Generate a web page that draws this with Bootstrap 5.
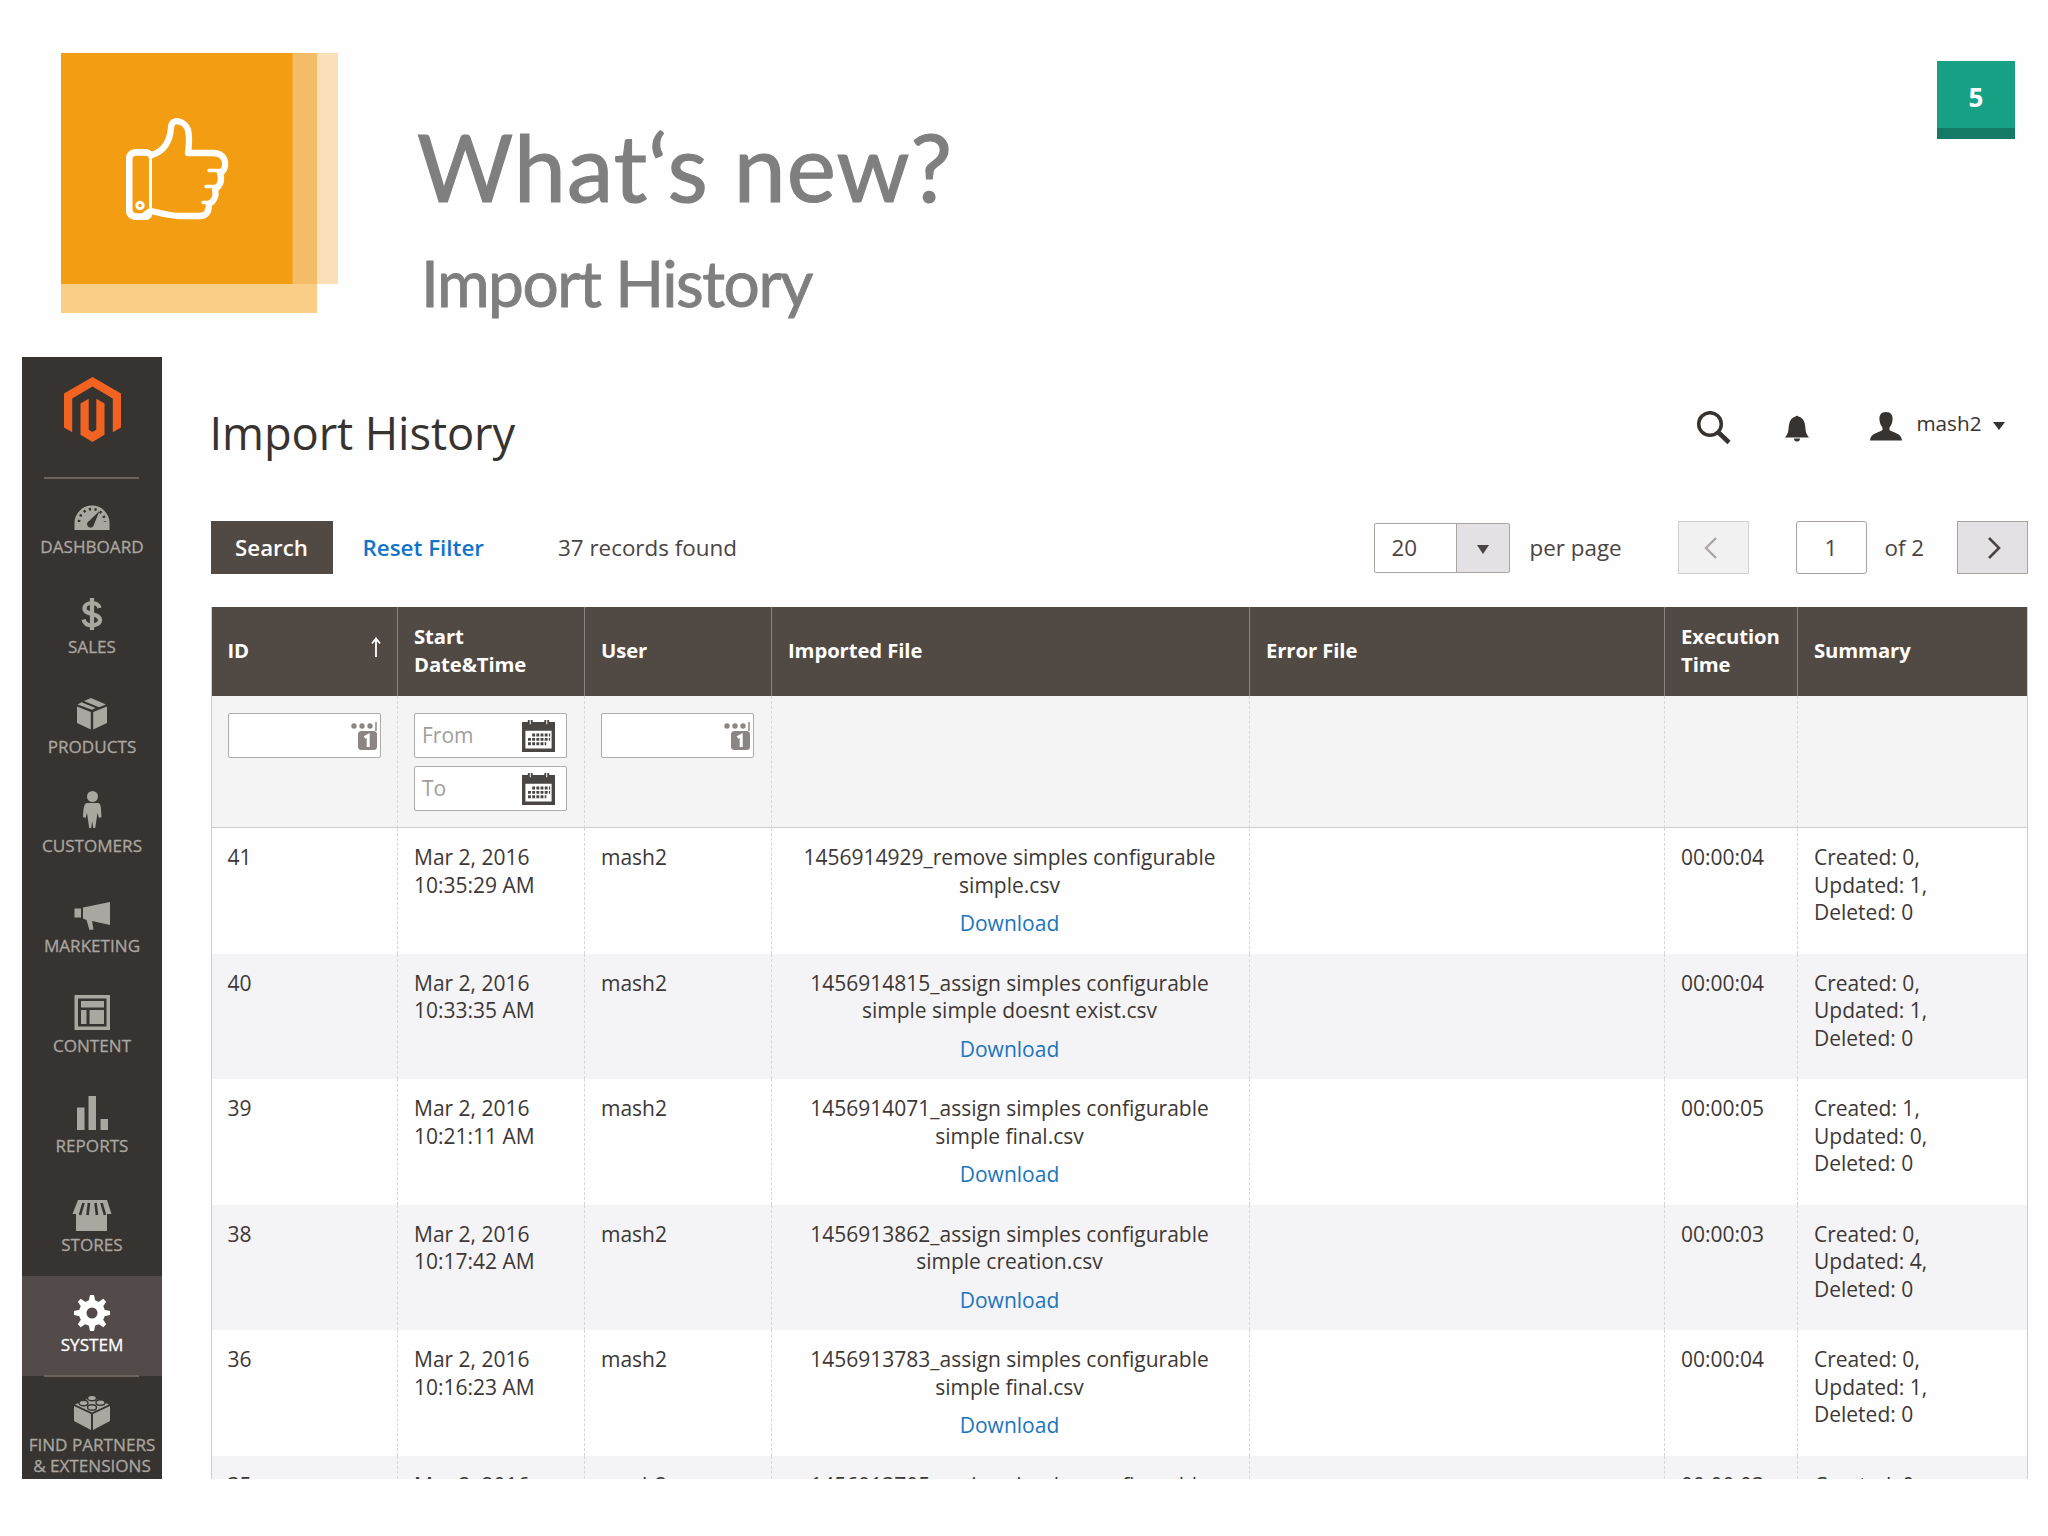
<!DOCTYPE html>
<html lang="en">
<head>
<meta charset="utf-8">
<meta name="viewport" content="width=device-width, initial-scale=1">
<title>What's new? Import History</title>
<link href="https://cdn.jsdelivr.net/npm/bootstrap@5.3.0/dist/css/bootstrap.min.css" rel="stylesheet">
<style>
body{width:2048px;height:1536px;overflow:hidden;background:#fefefe;font-family:"Open Sans","Noto Sans",sans-serif;color:#41362f}
.slide-head{height:357px;padding:53px 33px 0 61px}
.logo-art{width:277px;height:260px;flex:none}
.slide-titles{padding-left:79px;color:#7f7f7f;font-family:Lato,"Open Sans",sans-serif;white-space:nowrap}
.slide-titles h1{font-size:93px;line-height:110px;margin:58px 0 0;font-weight:400;letter-spacing:1.1px;-webkit-text-stroke:1.2px}
.slide-titles h2{font-size:64px;line-height:76px;margin:24px 0 0 4px;font-weight:400;letter-spacing:-1.5px;-webkit-text-stroke:.9px}
.page-no{width:78px;height:78px;margin-top:8px;background:#18a085;border-bottom:11px solid #147a66;color:#fff;font-weight:700;font-size:26px;line-height:73px;font-family:"Open Sans",sans-serif}
.shot{height:1122px;padding-left:22px;overflow:hidden}
.rail{width:140px;background:#373330;flex:none;overflow:hidden}
.rail-logo{height:121px;padding-top:20px;position:relative}
.rail-logo::after,.rail-item.active::after{content:"";position:absolute;left:22px;width:95px;bottom:-1px;height:2px;background:#6b635c}
.rail-item{height:99.75px;padding-top:17px;color:#aaa6a0;font-size:17.1px;line-height:21px;white-space:nowrap;position:relative;-webkit-text-stroke:.3px}
.rail-item svg{display:block;margin:0 auto 3px;width:40px;height:38px}
.rail-item.active{background:#524b49;color:#fff;padding-top:18px}
.rail-item.active svg{margin-bottom:2px}
.rail-item.low{padding-top:20px}
.rail-item.low svg{margin-bottom:0}
.rail-item.last{height:105px;padding-top:17px}
.work{width:1817px;margin-left:48.5px;flex:none}
.topbar{height:164px;padding:35px 23px 0 0}
.topbar h3{font-size:45.3px;line-height:60px;margin:11px 0 0 -1px;font-weight:400;color:#373330;letter-spacing:-.1px}
.tools{height:64px;color:#373330;font-size:20.7px}
.bar-row{height:86px;font-size:22.4px;line-height:30px;color:#4a4542}
.btn-dark2{background:#514943;color:#fff;border:0;border-radius:0;width:122px;height:53px;font-size:22.3px;font-weight:600;padding:0}
.reset{color:#1274c8;text-decoration:none;font-weight:600;margin-left:30px}
.found{margin-left:74px}
.picker{width:136px;height:50px;border:1.5px solid #aaa4a0;border-radius:2px;background:#fff}
.picker-arrow{width:53px;background:#e3e1e3;border-left:1.5px solid #aaa4a0}
.sq{width:71px;height:53px;border:1.5px solid #a8a2a0;background:#e3e1e3}
.sq.off{border-color:#d2cfd0;background:#f2f1f2}
.sq.field{background:#fff;border-radius:3px}
.grid{width:1817px;table-layout:fixed;border-collapse:separate;border-spacing:0;font-size:21px;line-height:27.5px;border-left:1.5px solid #cfcccc;border-right:1.5px solid #cfcccc}
.grid th{height:89px;background:#514943;color:#fff;font-weight:700;font-size:20.3px;padding:0 0 1.5px 16px;border-right:1.5px solid #8a837f;vertical-align:middle;letter-spacing:-.1px}
.grid td{height:125.6px;padding:16px 16px 0;vertical-align:top;border-right:1.5px dashed #d9d6d7;color:#3d3836;white-space:nowrap}
.grid th:last-child,.grid td:last-child{border-right:0}
.grid .filters td{height:132px;background:#f5f4f5;padding:17px 16px 0;border-bottom:1.5px solid #cfcccc}
.grid .alt td{background:#f4f3f5}
.grid td.text-center{padding-right:18px}
.grid a{display:block;color:#1b75bc;text-decoration:none;margin-top:11px}
.inbox{width:153px;height:45px;border:1.5px solid #aeabab;border-radius:2px;background:#fff;color:#a19d9a;padding:0 11px 0 7px}
.inbox.num{padding-right:2px}
.inbox+.inbox{margin-top:8px}
</style>
<script src="https://cdn.jsdelivr.net/npm/bootstrap@5.3.0/dist/js/bootstrap.bundle.min.js"></script>
</head>
<body>
<svg width="0" height="0" class="position-absolute">
  <symbol id="cal" viewBox="0 0 34 34"><path fill="#4a4643" fill-rule="evenodd" d="M0 3h34v31H0zM3.500 12v18.500h27V12z"/><g fill="none" stroke="#fff" stroke-width="3.400"><path d="M8.500 0v7M25.500 0v7"/></g><g fill="none" stroke="#4a4643" stroke-width="2"><path d="M7 1v5.500h3V1M24 1v5.500h3V1"/></g><g stroke="#4a4643" stroke-width="3" stroke-dasharray="3 1.300"><path d="M10.500 16.500H29M6.200 21H29M6.200 25.500H25"/></g></symbol>
  <symbol id="pin" viewBox="0 0 27 28"><g fill="#8b8683"><circle cx="3" cy="4" r="2.700"/><circle cx="11" cy="4" r="2.700"/><circle cx="19" cy="4" r="2.700"/><rect x="7" y="9" width="19" height="19" rx="3.500"/></g><path stroke="#8b8683" stroke-width="1.500" d="M25 0v9"/><path d="M13.500 15.500l3.700-2v11.500" fill="none" stroke="#fff" stroke-width="3"/></symbol>
</svg>

<header class="slide-head d-flex align-items-start">
  <svg class="logo-art" viewBox="0 0 277 260">
    <rect width="277" height="231" fill="#fae0b8"/>
    <rect y="231" width="256" height="29" fill="#f9ce87"/>
    <rect x="231" width="25" height="231" fill="#f5bd68"/>
    <rect width="231.500" height="231" fill="#f39d12"/>
    <path fill="#fff" fill-rule="evenodd" d="M75 96h9c4 0 7 2 7 6v59c0 4-3 6-7 6h-9c-6 0-10-4-10-9v-53c0-5 4-9 10-9zM75 102.700c-2 0-3.500 1.500-3.500 3.500v50c0 2 1.500 4 3.500 4h10c2 0 3-1.500 3-3.500v-50.500c0-2-1-3.500-3-3.500z"/>
    <g fill="none" stroke="#fff" stroke-width="6.300" stroke-linejoin="round" stroke-linecap="round">
      <path d="M86 99.500l5 2.500c12-4 18-14 19-27 0-11 14-7.500 17 2 2 8 1 15 0 23h25c16 0 14 18 7 20 3 8-1 14-5 16 2 8-2 13-6 15 0 8-3 12-9 12h-20c-10 0-20-3-29-5l-5 3"/>
      <path d="M160 117.500h-12M156 133.500h-11M152 149.500h-10" stroke-width="3.400"/>
      <circle cx="79" cy="152.500" r="3.200" stroke-width="3"/>
    </g>
  </svg>
  <div class="slide-titles">
    <h1>What‘s new?</h1>
    <h2>Import History</h2>
  </div>
  <div class="page-no text-center ms-auto">5</div>
</header>

<main class="shot d-flex">
  <nav class="rail text-center">
    <div class="rail-logo">
      <svg width="57" height="65" viewBox="0 0 57 65"><path fill="#f26322" d="M28.500 0L57 16.500v34l-8.200 4.700V21.500L28.500 9.500 8.200 21.500v33.700L0 50.500v-34zM16.500 26.500l8.200-4.700v31l3.800 2.300 3.800-2.300v-31l8.200 4.700v31.300L28.500 65l-12-7.200z"/></svg>
    </div>
    <div class="rail-item low"><svg viewBox="0 0 40 38"><path fill="currentColor" d="M2.500 32V25a17.500 17.500 0 0 1 35 0v7z"/><path d="M7 24a13 13 0 0 1 26 0" fill="none" stroke="#373330" stroke-width="2.600" stroke-dasharray="2.200 3.500"/><path fill="#373330" d="M27.500 13l-5.500 13.500a3.500 3.500 0 1 1-5-3.500z"/></svg>DASHBOARD</div>
    <div class="rail-item"><svg viewBox="0 0 40 38"><path d="M27.500 13c-1-4-4.500-5-7.500-5-4 0-7.500 2-7.500 5.500 0 7 15.500 4 15.500 11.500 0 3.500-4 5.500-8 5.500s-7.500-2-8.500-6M20 3v32" fill="none" stroke="currentColor" stroke-width="4.200"/></svg>SALES</div>
    <div class="rail-item"><svg viewBox="0 0 40 38"><path fill="currentColor" d="M5 11.500L18.800 17v17.500L5 28zM35 11.500L21.200 17v17.500L35 28zM5.500 9.500l4-2.200L23.500 13 20 14.800zM12 6l7-3 15 6.500-7 2.700z"/></svg>PRODUCTS</div>
    <div class="rail-item"><svg viewBox="0 0 40 38" overflow="visible"><circle cx="20.500" cy="2.500" r="5.500" fill="currentColor"/><path fill="currentColor" d="M15 9h11c3 0 3 5 3.500 14l-2.500 1-1.500-5-2.300 15h-2l-1-7-1 7h-2l-2.200-15-1.500 5-2.500-1c.5-9 1-14 4-14z"/></svg>CUSTOMERS</div>
    <div class="rail-item"><svg viewBox="0 0 40 38"><path fill="currentColor" d="M2.500 14.500H9v9H2.500zM11 13.500L38 8v23l-18-4 1.500 8.500-4 .5-3-10-3.500-1.500z"/></svg>MARKETING</div>
    <div class="rail-item"><svg viewBox="0 0 40 38"><path fill="currentColor" fill-rule="evenodd" d="M2.500 1h35.500v35H2.500zM6 4.500v28h28.500v-28zM9 7h23v6.500H9zM9 16h5.500v14H9zM17.500 16H32v14H17.500z"/></svg>CONTENT</div>
    <div class="rail-item"><svg viewBox="0 0 40 38"><path fill="currentColor" d="M5 13.500h7.500V36H5zM16.500 2H24v34h-7.500zM28.500 25H36v11h-7.500z"/></svg>REPORTS</div>
    <div class="rail-item low"><svg viewBox="0 0 40 38"><path fill="currentColor" d="M6 4h29l4.500 14H35v17H4V18H.5z"/><g stroke="#373330" stroke-width="2.600" fill="none"><path d="M11.500 7L8 19M17 7l-1.500 12M23.500 7L25 19M29.500 7L33 19"/></g></svg>STORES</div>
    <div class="rail-item active"><svg viewBox="0 0 40 38"><g fill="currentColor"><path id="tooth" d="M16.500 8l1.500-7h4l1.500 7v22L22 37h-4l-1.500-7z"/><use href="#tooth" transform="rotate(45 20 19)"/><use href="#tooth" transform="rotate(90 20 19)"/><use href="#tooth" transform="rotate(135 20 19)"/><circle cx="20" cy="19" r="13"/></g><circle cx="20" cy="19" r="5.500" fill="#524b49"/></svg>SYSTEM</div>
    <div class="rail-item last"><svg viewBox="0 0 40 38"><path fill="currentColor" d="M2 13l17 8v16L2 28zM38 13l-17 8v16l17-9zM3 11.500L19.500 4 37 11.500l-17 8z"/><g fill="currentColor" stroke="#373330" stroke-width="1.400"><ellipse cx="20" cy="5" rx="4.500" ry="2.800"/><ellipse cx="11.500" cy="10" rx="4.500" ry="2.800"/><ellipse cx="28.500" cy="9.500" rx="4.500" ry="2.800"/><ellipse cx="20" cy="14.500" rx="4.500" ry="2.800"/></g></svg>FIND PARTNERS<br>&amp; EXTENSIONS</div>
  </nav>

  <section class="work">
    <div class="topbar d-flex justify-content-between align-items-start">
      <h3>Import History</h3>
      <div class="tools d-flex align-items-center">
        <svg width="36" height="34" viewBox="0 0 36 34" class="mt-2"><circle cx="14" cy="13" r="11.300" fill="none" stroke="#373330" stroke-width="3.500"/><path d="M22 21l11 10.500" stroke="#373330" stroke-width="4.600"/></svg>
        <svg width="24" height="28" viewBox="0 0 24 28" class="mt-2" style="margin-left:53px"><path fill="#373330" d="M10.500 2.500a1.800 1.800 0 0 1 3 0C19 4 20 9 20.500 15c.3 4 1.500 6 3.500 8.500H0C2 21 3.200 19 3.500 15 4 9 5 4 10.500 2.500zM9 24.500h6a3 3 0 0 1-6 0z"/></svg>
        <svg width="32" height="29" viewBox="0 0 32 29" style="margin-left:61px" class="mt-1"><path fill="#373330" d="M16 0c5 0 7 3.500 6.500 8-.3 4-2 6-3 7.500V18c2 2.500 12 2.500 12.500 10.500H0C.5 20.500 10.500 20.500 12.500 18v-2.500c-1-1.500-2.700-3.500-3-7.500C9 3.500 11 0 16 0z"/></svg>
        <span style="margin-left:14px">mash2</span>
        <svg width="12" height="8" viewBox="0 0 12 8" style="margin-left:11px" class="mt-1"><path fill="#373330" d="M0 0h12L6 8z"/></svg>
      </div>
    </div>

    <div class="bar-row d-flex align-items-start">
      <button class="btn btn-dark2">Search</button>
      <div class="d-flex align-items-center" style="height:53px"><a href="#" class="reset">Reset Filter</a><span class="found">37 records found</span></div>
      <div class="d-flex align-items-center ms-auto" style="height:53px">
        <div class="picker d-flex"><span class="flex-fill d-flex align-items-center" style="padding-left:17px">20</span><span class="picker-arrow d-flex align-items-center justify-content-center"><svg width="12" height="9" viewBox="0 0 12 9" class="mt-1"><path fill="#4a4542" d="M0 0h12L6 9z"/></svg></span></div>
        <span style="margin-left:20px;width:148px">per page</span>
        <span class="sq off d-flex align-items-center justify-content-center pe-1"><svg width="14" height="22" viewBox="0 0 14 22"><path d="M12 1L2 11l10 10" fill="none" stroke="#aaa6a6" stroke-width="2.400"/></svg></span>
        <span class="sq field d-flex align-items-center justify-content-center" style="margin-left:47px">1</span>
        <span style="margin-left:18px;width:72px">of 2</span>
        <span class="sq d-flex align-items-center justify-content-center"><svg width="14" height="22" viewBox="0 0 14 22" class="ms-1"><path d="M2 1l10 10L2 21" fill="none" stroke="#4a4542" stroke-width="2.600"/></svg></span>
      </div>
    </div>

    <table class="grid">
      <colgroup><col style="width:186.500px"><col style="width:187px"><col style="width:187px"><col style="width:478px"><col style="width:415px"><col style="width:133px"><col></colgroup>
      <thead>
        <tr><th><div class="d-flex justify-content-between align-items-center">ID<svg width="10" height="20" viewBox="0 0 10 20" style="margin:-8px 16px 0 0"><path d="M5 20V2M1 6.500L5 1.500l4 5" fill="none" stroke="#fff" stroke-width="1.800"/></svg></div></th><th>Start<br>Date&amp;Time</th><th>User</th><th>Imported File</th><th>Error File</th><th>Execution<br>Time</th><th>Summary</th></tr>
      </thead>
      <tbody>
        <tr class="filters">
          <td><div class="inbox num d-flex align-items-center justify-content-end"><svg width="27" height="28"><use href="#pin"/></svg></div></td>
          <td><div class="inbox d-flex align-items-center justify-content-between">From<svg width="33" height="33"><use href="#cal"/></svg></div><div class="inbox d-flex align-items-center justify-content-between">To<svg width="33" height="33"><use href="#cal"/></svg></div></td>
          <td><div class="inbox num d-flex align-items-center justify-content-end"><svg width="27" height="28"><use href="#pin"/></svg></div></td>
          <td></td><td></td><td></td><td></td>
        </tr>
        <tr><td>41</td><td>Mar 2, 2016<br>10:35:29 AM</td><td>mash2</td><td class="text-center">1456914929_remove simples configurable<br>simple.csv<a href="#">Download</a></td><td></td><td>00:00:04</td><td>Created: 0,<br>Updated: 1,<br>Deleted: 0</td></tr>
        <tr class="alt"><td>40</td><td>Mar 2, 2016<br>10:33:35 AM</td><td>mash2</td><td class="text-center">1456914815_assign simples configurable<br>simple simple doesnt exist.csv<a href="#">Download</a></td><td></td><td>00:00:04</td><td>Created: 0,<br>Updated: 1,<br>Deleted: 0</td></tr>
        <tr><td>39</td><td>Mar 2, 2016<br>10:21:11 AM</td><td>mash2</td><td class="text-center">1456914071_assign simples configurable<br>simple final.csv<a href="#">Download</a></td><td></td><td>00:00:05</td><td>Created: 1,<br>Updated: 0,<br>Deleted: 0</td></tr>
        <tr class="alt"><td>38</td><td>Mar 2, 2016<br>10:17:42 AM</td><td>mash2</td><td class="text-center">1456913862_assign simples configurable<br>simple creation.csv<a href="#">Download</a></td><td></td><td>00:00:03</td><td>Created: 0,<br>Updated: 4,<br>Deleted: 0</td></tr>
        <tr><td>36</td><td>Mar 2, 2016<br>10:16:23 AM</td><td>mash2</td><td class="text-center">1456913783_assign simples configurable<br>simple final.csv<a href="#">Download</a></td><td></td><td>00:00:04</td><td>Created: 0,<br>Updated: 1,<br>Deleted: 0</td></tr>
        <tr class="alt"><td>35</td><td>Mar 2, 2016</td><td>mash2</td><td class="text-center">1456913705_assign simples configurable</td><td></td><td>00:00:03</td><td>Created: 0,</td></tr>
      </tbody>
    </table>
  </section>
</main>
</body>
</html>
